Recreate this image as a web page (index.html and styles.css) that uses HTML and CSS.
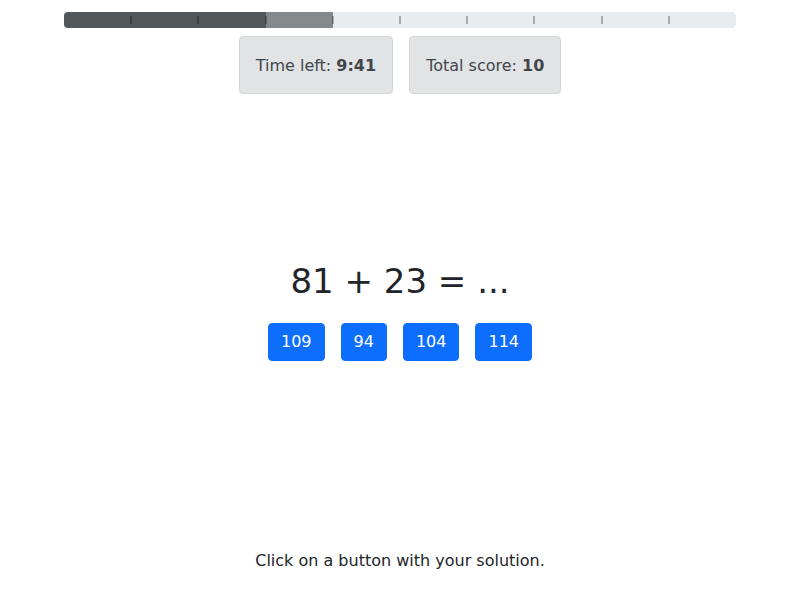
FILE: index.html
```html
<!DOCTYPE html>
<html lang="en">
<head>
<meta charset="utf-8">
<title>Mental arithmetic</title>
<link rel="stylesheet" href="styles.css">
</head>
<body>
<div class="page">
  <div class="progress">
    <div class="seg seg-done" style="width:30%"></div>
    <div class="seg seg-current" style="width:10%"></div>
    <div class="ticks">
      <span class="cell"></span><span class="cell"></span><span class="cell"></span>
      <span class="cell"></span><span class="cell"></span><span class="cell"></span>
      <span class="cell"></span><span class="cell"></span><span class="cell"></span>
      <span class="cell last"></span>
    </div>
  </div>
  <div class="stats">
    <div class="stat">Time left: <b>9:41</b></div>
    <div class="stat">Total score: <b>10</b></div>
  </div>
  <main class="task">
    <h1 class="equation">81 + 23 = ...</h1>
    <div class="answers">
      <button class="btn">109</button>
      <button class="btn">94</button>
      <button class="btn">104</button>
      <button class="btn">114</button>
    </div>
  </main>
  <p class="hint">Click on a button with your solution.</p>
</div>
</body>
</html>
```
FILE: styles.css
```css
* { box-sizing: border-box; }
html, body { margin: 0; padding: 0; }
body {
  font-family: "DejaVu Sans", sans-serif;
  font-size: 16px;
  line-height: 24px;
  color: #212529;
  background: #fff;
}
.page {
  height: 600px;
  padding-top: 12px;
  display: flex;
  flex-direction: column;
  align-items: center;
}
.progress {
  position: relative;
  width: 672px;
  height: 16px;
  background: #e9ecef;
  border-radius: 4px;
  overflow: hidden;
  display: flex;
}
.seg { height: 100%; }
.seg-done { background: #53575a; }
.seg-current { background: #85898c; }
.ticks {
  position: absolute;
  inset: 0;
  display: grid;
  grid-template-columns: repeat(10, 1fr);
  align-items: center;
}
.cell {
  height: 8px;
  display: flex;
  justify-content: flex-end;
}
.cell::after {
  content: "";
  width: 2px;
  height: 8px;
  margin-right: -1px;
  background: rgba(0, 0, 0, 0.28);
}
.cell.last::after { display: none; }
.stats {
  display: flex;
  gap: 16px;
  margin-top: 8px;
}
.stat {
  padding: 17px 16px 15px;
  background: #e2e3e5;
  border: 1px solid #d3d6d8;
  border-radius: 4px;
  color: #41464b;
}
.stat b { font-weight: bold; }
.task {
  margin-top: 167px;
  display: flex;
  flex-direction: column;
  align-items: center;
}
.equation {
  margin: 0;
  font-size: 34px;
  line-height: 40.8px;
  font-weight: 500;
}
.answers {
  display: flex;
  gap: 16px;
  margin-top: 21px;
}
.btn {
  font-family: "DejaVu Sans", sans-serif;
  font-size: 16px;
  line-height: 24px;
  padding: 6px 12px;
  border: 1px solid #0d6efd;
  background: #0d6efd;
  color: #fff;
  border-radius: 4px;
}
.hint {
  margin: auto 0 27px;
}
```
